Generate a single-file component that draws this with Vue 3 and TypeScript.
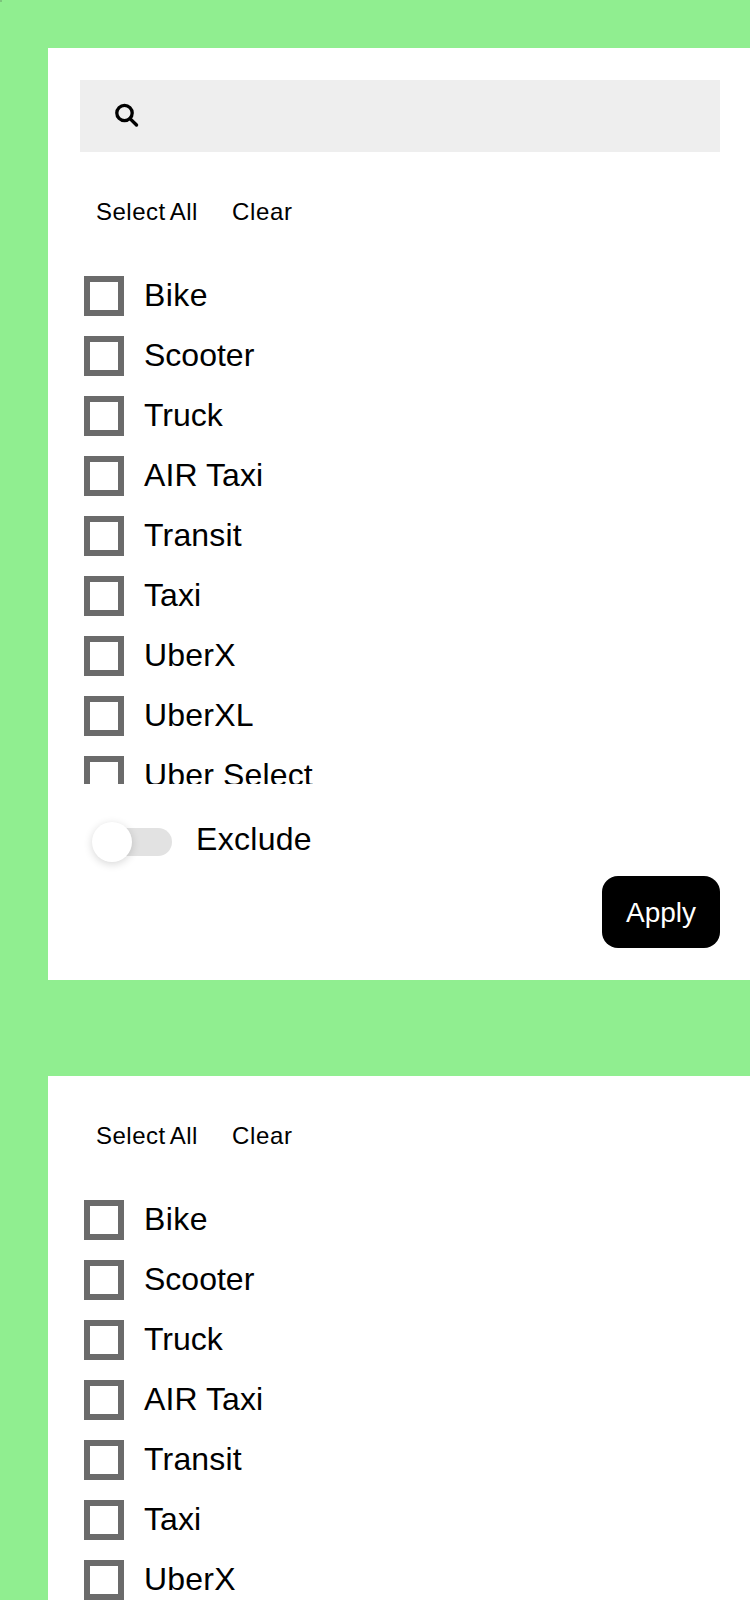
<script setup lang="ts">
interface Filter {
  id: string
  searchable: boolean
}

interface Option {
  label: string
  tracking: number
}

const filters: Filter[] = [
  { id: 'with-search', searchable: true },
  { id: 'without-search', searchable: false },
]

const options: Option[] = [
  { label: 'Bike', tracking: 0.4 },
  { label: 'Scooter', tracking: 0 },
  { label: 'Truck', tracking: 0 },
  { label: 'AIR Taxi', tracking: 0.08 },
  { label: 'Transit', tracking: 0.18 },
  { label: 'Taxi', tracking: 0.1 },
  { label: 'UberX', tracking: 0.2 },
  { label: 'UberXL', tracking: 0.2 },
  { label: 'Uber Select', tracking: 0.15 },
]
</script>

<template>
  <main class="page">
    <span class="marker"></span>
    <section v-for="filter in filters" :key="filter.id" class="card">
      <div v-if="filter.searchable" class="search">
        <svg class="search-icon" viewBox="0 0 24 24" fill="none" stroke="#000">
          <circle cx="10.5" cy="9" r="7.7" stroke-width="3.3" />
          <path d="M16 14.6L22.5 21" stroke-width="3.4" stroke-linecap="round" />
        </svg>
      </div>
      <div class="actions">
        <button type="button" class="action">Select All</button>
        <button type="button" class="action clear">Clear</button>
      </div>
      <div class="options">
        <label v-for="option in options" :key="option.label" class="option">
          <span class="box"></span>
          <span class="label" :style="{ letterSpacing: option.tracking + 'px' }">{{ option.label }}</span>
        </label>
      </div>
      <label class="exclude">
        <span class="track"><span class="knob"></span></span>
        <span class="exclude-label">Exclude</span>
      </label>
      <div class="footer">
        <button type="button" class="apply">Apply</button>
      </div>
    </section>
  </main>
</template>

<style>
html,
body {
  overflow: hidden;
}
</style>

<style scoped>
.page {
  position: relative;
  box-sizing: border-box;
  width: 750px;
  height: 1600px;
  padding: 48px 0 0 48px;
  overflow: hidden;
  background: #90ee90;
  color: #000;
  font-family: "Liberation Sans", Arial, sans-serif;
}
.marker {
  position: absolute;
  top: 0;
  left: 0;
  width: 2px;
  height: 2px;
  background: #7dc67d;
}
.card {
  box-sizing: border-box;
  width: 704px;
  padding: 32px;
  margin-bottom: 96px;
  background: #fff;
}
.search {
  display: flex;
  align-items: center;
  height: 72px;
  padding-left: 34px;
  margin-bottom: 24px;
  background: #eee;
}
.search-icon {
  width: 24px;
  height: 24px;
  overflow: visible;
}
.actions {
  display: flex;
  gap: 2px;
  height: 72px;
  margin-bottom: 24px;
}
.card > .actions:first-child {
  margin-top: -8px;
}
.action {
  padding: 0 16px;
  border: 0;
  background: none;
  color: inherit;
  font: 24px/72px "Liberation Sans", Arial, sans-serif;
  letter-spacing: 0.5px;
  word-spacing: -1.8px;
}
.clear {
  letter-spacing: 0.65px;
}
.options {
  height: 512px;
  overflow: hidden;
}
.option {
  display: flex;
  align-items: center;
  height: 48px;
  padding-left: 4px;
  margin-bottom: 12px;
  font-size: 32px;
  line-height: 40px;
}
.label {
  padding-bottom: 2px;
}
.box {
  box-sizing: border-box;
  width: 40px;
  height: 40px;
  margin-right: 20px;
  border: 6px solid #6b6b6b;
}
.exclude {
  display: flex;
  align-items: flex-start;
  height: 40px;
  margin: 36px 0 16px;
  padding-left: 20px;
  font-size: 32px;
}
.exclude-label {
  letter-spacing: 0.3px;
  line-height: 38px;
}
.track {
  position: relative;
  width: 72px;
  height: 28px;
  margin: 8px 24px 0 0;
  border-radius: 14px;
  background: #e2e2e2;
}
.knob {
  position: absolute;
  top: -6px;
  left: -8px;
  width: 40px;
  height: 40px;
  border-radius: 50%;
  background: #fff;
  box-shadow: 0 2px 8px rgba(0, 0, 0, 0.16);
}
.footer {
  display: flex;
  justify-content: flex-end;
}
.apply {
  height: 72px;
  padding: 2px 24px 0;
  border: 0;
  border-radius: 16px;
  background: #000;
  color: #fff;
  font: 28px/70px "Liberation Sans", Arial, sans-serif;
}
</style>
